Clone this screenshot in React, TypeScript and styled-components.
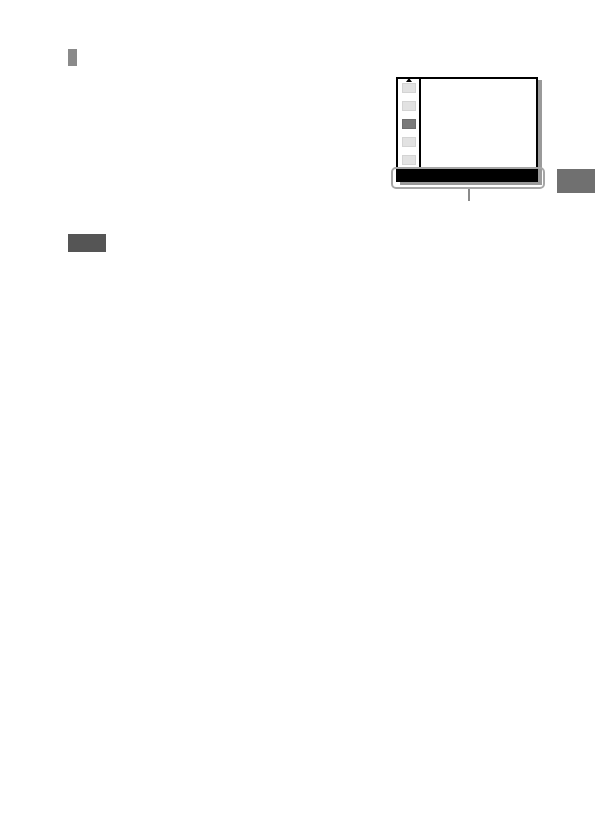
import styled, { createGlobalStyle } from "styled-components";

const GlobalStyle = createGlobalStyle`
  html, body {
    margin: 0;
    padding: 0;
    background: #ffffff;
    font-family: "Liberation Sans", Arial, sans-serif;
  }
`;

const Page = styled.div`
  width: 595px;
  height: 839px;
  box-sizing: border-box;
  padding: 49px 0 0 68px;
  background: #ffffff;
  overflow: hidden;
`;

const TopRow = styled.div`
  display: flex;
  align-items: flex-start;
`;

const LeftCol = styled.div`
  width: 322px;
  flex-shrink: 0;
`;

const Marker = styled.div<{ $w: number; $h: number; $color: string }>`
  width: ${(p) => p.$w}px;
  height: ${(p) => p.$h}px;
  background: ${(p) => p.$color};
`;

const Figure = styled.div`
  position: relative;
  width: 155px;
  flex-shrink: 0;
  display: flex;
  flex-direction: column;
`;

const Screen = styled.div`
  margin: 28px 0 0 6px;
  width: 142px;
  height: 105px;
  box-sizing: border-box;
  border: 2px solid #000;
  border-bottom: none;
  display: flex;
  flex-direction: column;
  box-shadow: 4px 3px 0 #9a9a9a;
`;

const ScreenBody = styled.div`
  flex: 1;
  display: flex;
`;

const IconRail = styled.div`
  width: 23px;
  box-sizing: border-box;
  border-right: 2px solid #000;
  display: flex;
  flex-direction: column;
  align-items: center;
  gap: 8px;
`;

const UpArrow = styled.div`
  width: 0;
  height: 0;
  margin-top: -1px;
  margin-bottom: -7px;
  border-left: 3px solid transparent;
  border-right: 3px solid transparent;
  border-bottom: 4px solid #000;
`;

const MenuIcon = styled.div<{ $active?: boolean }>`
  width: 14px;
  height: 10px;
  box-sizing: border-box;
  background: ${(p) => (p.$active ? "#7a7a7a" : "#e2e2e2")};
  border: 1px solid ${(p) => (p.$active ? "#6e6e6e" : "#d4d4d4")};
`;

const InfoBar = styled.div`
  height: 13px;
  background: #000;
  margin: 0 -2px;
`;

const Highlight = styled.div`
  position: absolute;
  left: 1px;
  top: 118px;
  width: 154px;
  height: 22px;
  box-sizing: border-box;
  border: 2px solid #a6a6a6;
  border-radius: 5px;
`;

const Callout = styled.div`
  margin: 7px 0 0 78px;
  width: 2px;
  height: 12px;
  background: #8a8a8a;
`;

const EdgeTab = styled.div`
  margin: 120px 0 0 12px;
  width: 38px;
  height: 24px;
  background: #707070;
`;

const LowerSection = styled.div`
  margin-top: 33px;
`;

const icons = [false, false, true, false, false];

export default function App() {
  return (
    <>
      <GlobalStyle />
      <Page>
        <TopRow>
          <LeftCol>
            <Marker $w={9} $h={17} $color="#8a8a8a" />
          </LeftCol>
          <Figure>
            <Screen>
              <ScreenBody>
                <IconRail>
                  <UpArrow />
                  {icons.map((active, i) => (
                    <MenuIcon key={i} $active={active} />
                  ))}
                </IconRail>
              </ScreenBody>
              <InfoBar />
            </Screen>
            <Highlight />
            <Callout />
          </Figure>
          <EdgeTab />
        </TopRow>
        <LowerSection>
          <Marker $w={38} $h={18} $color="#555555" />
        </LowerSection>
      </Page>
    </>
  );
}
